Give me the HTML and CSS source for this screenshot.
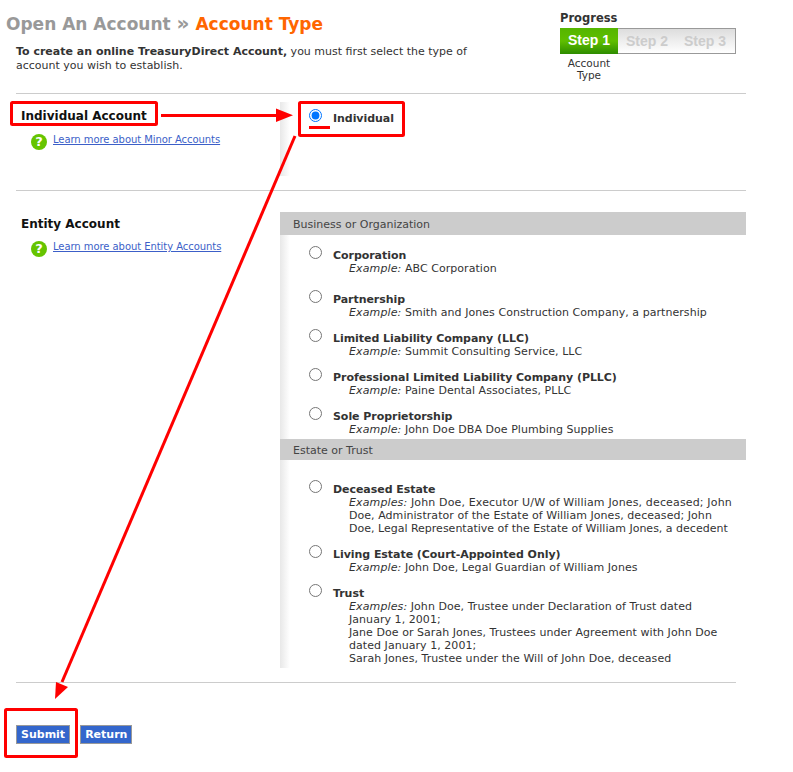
FILE: index.html
```html
<!DOCTYPE html>
<html lang="en">
<head>
  <meta charset="UTF-8" />
  <title>Open An Account - Account Type</title>
  <link rel="stylesheet" href="styles.css">
</head>
<body>
<div class="page">

  <div class="top">
    <div class="top-left">
      <h1><span class="crumb">Open An Account <span class="sep">&raquo;</span></span> <span class="current">Account Type</span></h1>
      <p class="intro"><b>To create an online TreasuryDirect Account,</b> you must first select the type of<br>account you wish to establish.</p>
    </div>
    <div class="progress">
      <div class="progress-title">Progress</div>
      <div class="steps">
        <div class="step active">Step 1</div>
        <div class="step">Step 2</div>
        <div class="step">Step 3</div>
      </div>
      <div class="step-name">Account<br>Type</div>
    </div>
  </div>

  <div class="section section-individual">
    <div class="side">
      <h2>Individual Account</h2>
      <div class="learn">
        <span class="help">?</span>
        <a href="#">Learn more about Minor Accounts</a>
      </div>
    </div>
    <div class="choices choices-individual">
      <label class="option">
        <input type="radio" name="type" checked>
        <span class="option-text"><b>Individual</b></span>
      </label>
    </div>
  </div>

  <div class="section section-entity">
    <div class="side">
      <h2>Entity Account</h2>
      <div class="learn">
        <span class="help">?</span>
        <a href="#">Learn more about Entity Accounts</a>
      </div>
    </div>
    <div class="choices">
      <div class="group-head">Business or Organization</div>
      <div class="group">
        <label class="option">
          <input type="radio" name="type">
          <span class="option-text"><b>Corporation</b><span class="example"><i>Example:</i> ABC Corporation</span></span>
        </label>
        <label class="option">
          <input type="radio" name="type">
          <span class="option-text"><b>Partnership</b><span class="example"><i>Example:</i> Smith and Jones Construction Company, a partnership</span></span>
        </label>
        <label class="option">
          <input type="radio" name="type">
          <span class="option-text"><b>Limited Liability Company (LLC)</b><span class="example"><i>Example:</i> Summit Consulting Service, LLC</span></span>
        </label>
        <label class="option">
          <input type="radio" name="type">
          <span class="option-text"><b>Professional Limited Liability Company (PLLC)</b><span class="example"><i>Example:</i> Paine Dental Associates, PLLC</span></span>
        </label>
        <label class="option">
          <input type="radio" name="type">
          <span class="option-text"><b>Sole Proprietorship</b><span class="example"><i>Example:</i> John Doe DBA Doe Plumbing Supplies</span></span>
        </label>
      </div>
      <div class="group-head group-head-short">Estate or Trust</div>
      <div class="group group-estate">
        <label class="option">
          <input type="radio" name="type">
          <span class="option-text"><b>Deceased Estate</b><span class="example"><span class="line-wide"><i>Examples:</i> John Doe, Executor U/W of William Jones, deceased; John</span><br>Doe, Administrator of the Estate of William Jones, deceased; John<br><span class="line-plain">Doe, Legal Representative of the Estate of William Jones, a decedent</span></span></span>
        </label>
        <label class="option">
          <input type="radio" name="type">
          <span class="option-text"><b>Living Estate (Court-Appointed Only)</b><span class="example"><i>Example:</i> John Doe, Legal Guardian of William Jones</span></span>
        </label>
        <label class="option">
          <input type="radio" name="type">
          <span class="option-text"><b>Trust</b><span class="example"><i>Examples:</i> John Doe, Trustee under Declaration of Trust dated<br>January 1, 2001;<br>Jane Doe or Sarah Jones, Trustees under Agreement with John Doe<br>dated January 1, 2001;<br>Sarah Jones, Trustee under the Will of John Doe, deceased</span></span>
        </label>
      </div>
    </div>
  </div>

  <div class="actions">
    <button type="button">Submit</button>
    <button type="button">Return</button>
  </div>
</div>

<!-- red annotations drawn over the page -->
<svg class="marks" width="793" height="772" viewBox="0 0 793 772">
  <g fill="none" stroke="#f00" stroke-width="3" stroke-linejoin="round">
    <rect x="11.500" y="102.500" width="145" height="22" rx="1"/>
    <rect x="299.500" y="102.500" width="104" height="33" rx="1"/>
    <rect x="5.500" y="709.500" width="71" height="47" rx="1"/>
    <path d="M161 115.500H277"/>
    <path d="M309 127.500H330"/>
    <path d="M295 136L62 682"/>
  </g>
  <path d="M293 115.300L276 108.500V122Z" fill="#f00"/>
  <path d="M55 699L56 682L68 687Z" fill="#f00"/>
</svg>
</body>
</html>
```

FILE: styles.css
```css
html, body {
  margin: 0;
  padding: 0;
  background: #fff;
  color: #333;
  font-family: "DejaVu Sans", Verdana, sans-serif;
  font-size: 11px;
}

.page {
  width: 730px;
  padding-left: 16px;
}

.top {
  display: flex;
  justify-content: space-between;
  height: 93px;
  border-bottom: 1px solid #ccc;
}

h1 {
  margin: 13px 0 0 -10px;
  font-size: 17px;
  line-height: 22px;
}

.crumb { color: #999; }
.sep { font-size: 20px; line-height: 1; }
.current { color: #f60; }

.intro {
  margin: 10px 0 0;
  line-height: 14px;
}

.progress {
  width: 176px;
  margin-right: 10px;
  padding-top: 11px;
}

.progress-title {
  font-weight: bold;
  font-size: 11.500px;
  line-height: 14px;
}

.steps {
  display: flex;
  height: 24px;
  margin-top: 3px;
  border: 1px solid #999;
  border-left: 0;
  background: linear-gradient(#ddd, #fff);
}

.step {
  width: 58px;
  font-family: "Liberation Sans", Arial, sans-serif;
  font-weight: bold;
  font-size: 14px;
  line-height: 24px;
  text-align: center;
  color: #ccc;
}

.step.active {
  margin: -1px 0;
  height: 26px;
  line-height: 25px;
  color: #fff;
  background: linear-gradient(#55b500, #5fbe00 50%, #2d8c00);
}

.step-name {
  width: 58px;
  margin-top: 3px;
  text-align: center;
  font-size: 10.500px;
  line-height: 12px;
}

.section {
  display: flex;
}

.section-individual {
  height: 96px;
  border-bottom: 1px solid #ccc;
}

.section-entity {
  padding-top: 21px;
  height: 470px;
  border-bottom: 1px solid #ccc;
  margin-right: 10px;
}

.side {
  width: 264px;
  flex: none;
  padding-left: 5px;
  box-sizing: border-box;
}

h2 {
  margin: 0;
  color: #111;
  font-size: 12px;
  line-height: 16px;
}

.section-individual h2 { margin-top: 14px; }
.section-entity h2 { margin-top: 4px; }

.learn {
  display: flex;
  align-items: flex-start;
  gap: 6px;
  margin: 9px 0 0 10px;
  font-size: 10px;
  line-height: 12px;
  letter-spacing: -0.060px;
}

.section-individual .learn { margin-top: 10px; }

.learn a { color: #3c5fc8; }

.help {
  width: 16px;
  height: 16px;
  border-radius: 50%;
  background: #66c400;
  color: #fff;
  font-weight: bold;
  font-size: 13px;
  line-height: 16px;
  text-align: center;
}

.choices {
  flex: 1;
  margin-right: -10px;
  background: linear-gradient(90deg, #e8e8e8, #fff 10px);
  align-self: flex-start;
}

.choices-individual {
  margin-top: 8px;
  height: 74px;
}

.group-head {
  background: #ccc;
  padding: 0 13px;
  height: 23px;
  line-height: 25px;
  color: #444;
}

.group-head-short {
  height: 21px;
  line-height: 23px;
}

.group {
  padding: 11px 0 3px;
}

.group-estate {
  padding-top: 20px;
}

.option {
  display: flex;
  padding-left: 29px;
  padding-bottom: 10px;
}

.group:not(.group-estate) .option:first-child { padding-bottom: 15px; }
.option:last-child { padding-bottom: 0; }

.option input {
  margin: 0 11px 0 0;
  width: 13px;
  height: 13px;
  flex: none;
}

.option-text {
  padding-top: 3px;
  line-height: 13px;
}

.option-text b {
  display: block;
  color: #333;
  letter-spacing: -0.050px;
}

.example {
  display: block;
  padding-left: 16px;
  letter-spacing: 0.050px;
}

.example i { letter-spacing: 0.120px; }
.line-wide { letter-spacing: 0.150px; }
.line-plain { letter-spacing: 0; }

.choices-individual .option {
  padding-top: 7px;
}

.actions {
  display: flex;
  gap: 10px;
  padding-top: 42px;
}

.actions button {
  margin: 0;
  padding: 0 4px;
  height: 19px;
  background: #36c;
  border: 1px solid #999;
  color: #fff;
  font-family: "DejaVu Sans", Verdana, sans-serif;
  font-size: 11px;
  font-weight: bold;
}

.marks {
  position: absolute;
  top: 0;
  left: 0;
  pointer-events: none;
}
```
